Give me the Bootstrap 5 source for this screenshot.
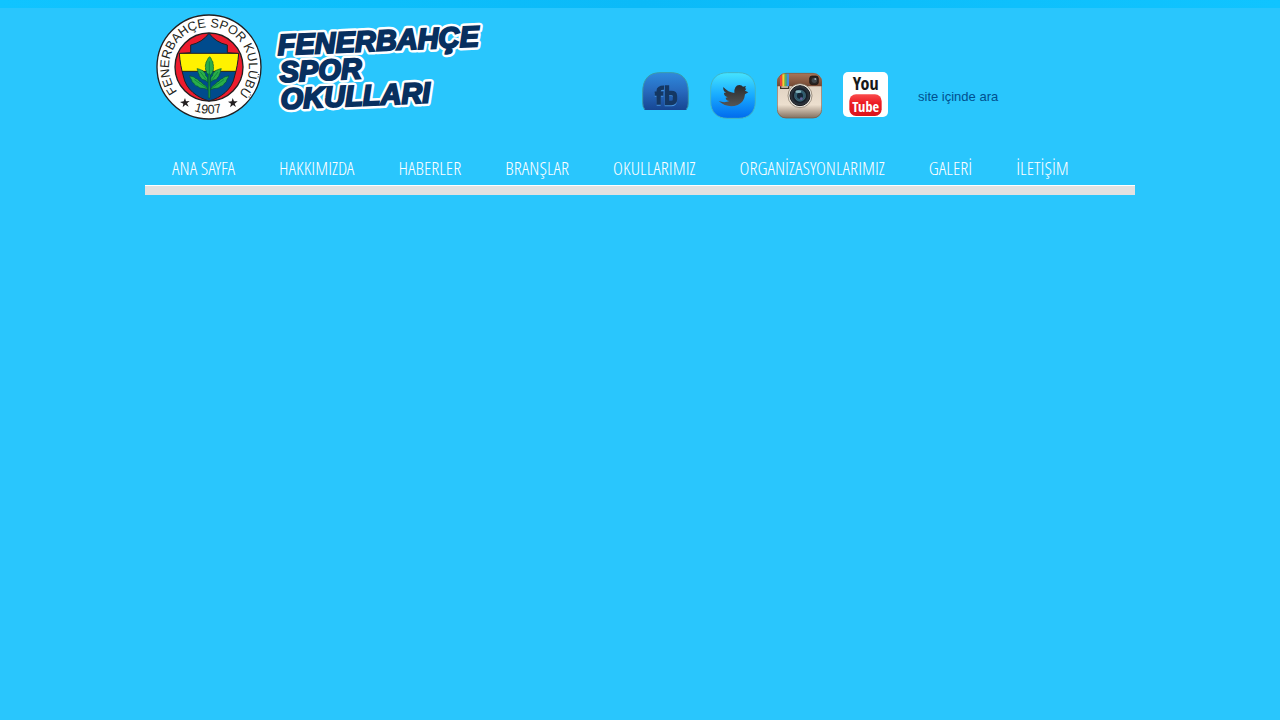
<!DOCTYPE html>
<html lang="tr">
<head>
<meta charset="utf-8">
<meta name="viewport" content="width=device-width, initial-scale=1">
<title>Fenerbahçe Spor Okulları</title>
<link rel="stylesheet" href="https://cdn.jsdelivr.net/npm/bootstrap@5.3.0/dist/css/bootstrap.min.css">
<style>
  body { background: #29c6fd; font-family: "Liberation Sans", Arial, sans-serif; }
  .top-strip { height: 8px; background: linear-gradient(90deg, #10c4ff, #0bbaf8 50%, #10c4ff); }
  .site { max-width: 990px; }
  .brand-area { padding: 6px 0 0 11px; gap: 12px; }
  .social { gap: 21px; padding-top: 64px; margin-left: auto; }
  .social a { display: block; }
  .social svg, .brand-area svg { display: block; }
  .search-box { width: 217px; margin: 78px 0 0 30px; }
  .search-box input { height: 22px; padding: 0; border: 0; background: transparent; color: #00508f; font-size: 13px; line-height: 22px; box-shadow: none; border-radius: 0; }
  .search-box input::placeholder { color: #00508f; opacity: 1; }
  .search-box input:focus { background: transparent; color: #00508f; box-shadow: none; }
  .menu { gap: 44px; padding: 34px 27px 3px; font-family: "Open Sans Condensed Light", "Open Sans Condensed", sans-serif; font-size: 19px; line-height: 28px; }
  .menu .nav-link { padding: 0; color: #fff; white-space: nowrap; }
  .rule { height: 10px; background: #e1e1e1; border-top: 1px solid #fff; }
  .crest-text { font: 38px "Liberation Sans", Arial, sans-serif; fill: #231f20; }
  .wordmark { font: italic bold 29px "Liberation Sans", Arial, sans-serif; }
  .wordmark .halo { fill: #fff; stroke: #fff; stroke-width: 7; stroke-linejoin: round; }
  .wordmark .ink { fill: #08305f; stroke: #08305f; stroke-width: 2; }
  .condensed { font-family: "Open Sans Condensed", "Open Sans", sans-serif; font-weight: bold; text-anchor: middle; }
</style>
</head>
<body>
<div class="top-strip"></div>
<div class="site container-fluid p-0">
  <header class="d-flex flex-wrap align-items-start">
    <a href="#" class="brand-area d-flex" aria-label="Fenerbahçe Spor Okulları">
      <svg width="106" height="106" viewBox="33 25 318 318">
        <defs>
          <path id="ring-top" d="M 97 258 A 120 120 0 1 1 280 266"/>
          <path id="ring-bottom" d="M 90 279 A 142 142 0 0 0 290 286"/>
          <path id="shield-shape" d="M192 83 Q212 110 247 118 L247 141 L281 143 C279 170 275 190 269 211 C262 252 226 277 192 286 C158 276 122 252 115 211 C109 190 105 170 103 143 L137 141 L137 118 Q172 110 192 83 Z"/>
          <clipPath id="shield"><use href="#shield-shape"/></clipPath>
        </defs>
        <circle cx="192" cy="184" r="156" fill="#fff" stroke="#231f20" stroke-width="4"/>
        <circle cx="192" cy="184" r="102" fill="#ed1c2e" stroke="#231f20" stroke-width="4"/>
        <g clip-path="url(#shield)">
          <path fill="#004b8d" d="M90 80h204v210H90z"/>
          <path fill="#fff200" stroke="#231f20" stroke-width="3" d="M90 143h204v54H90z"/>
        </g>
        <use href="#shield-shape" fill="none" stroke="#231f20" stroke-width="3"/>
        <g fill="#2aae4a" stroke="#00592d" stroke-width="2">
          <path d="M194 153c6 5 5 11 10 16-2 5 3 8 1 14 2 7-1 12-3 18l-6 9h-4l-8-10c2-5-5-8-2-14-3-6 1-10 1-16 4-5 4-12 11-17z"/>
          <path d="M188 253c-3-17-16-14-19-24-9 0-8-11-17-10-5-8-11-5-18-9 0 9 8 11 7 19 8 2 7 13 18 13 6 10 17 2 29 11z"/>
          <path d="M197 253c3-17 16-14 19-24 9 0 8-11 17-10 5-8 11-5 18-9 0 9-8 11-7 19-8 2-7 13-18 13-6 10-17 2-29 11z"/>
          <path d="M188 230c-1-9 2-15-6-20 1-8-5-9-8-15-6-2-10-5-18-6 4 7 1 11 6 17 0 8 6 8 8 15 6 2 11 1 18 9z"/>
          <path d="M197 230c1-9-2-15 6-20-1-8 5-9 8-15 6-2 10-5 18-6-4 7-1 11-6 17 0 8-6 8-8 15-6 2-11 1-18 9z"/>
          <path d="M190 205h5v72h-5z"/>
        </g>
        <path d="M193 167v75M148 222l39 27M237 222l-39 27M166 199l20 26M219 199l-20 26" stroke="#007b3a" stroke-width="2" fill="none"/>
        <text class="crest-text"><textPath href="#ring-top">FENERBAHÇE SPOR KULÜBÜ</textPath></text>
        <text class="crest-text" text-anchor="middle"><textPath href="#ring-bottom" startOffset="50%">1907</textPath></text>
        <path fill="#231f20" d="M120 277l3 10 11-1-8 7 5 10-10-6-8 8 2-11-10-5 11-2z"/>
        <path fill="#231f20" d="M263 277l4 10 11 0-9 7 4 10-9-6-9 7 3-11-9-6 11-1z"/>
      </svg>
      <svg width="210" height="106" viewBox="272 14 210 106">
        <g class="wordmark">
          <g class="halo">
            <text transform="translate(276 55) rotate(-2.5)">FENERBAHÇE</text>
            <text transform="translate(278 82) rotate(-2.5)">SPOR</text>
            <text transform="translate(279 109) rotate(-2.5)">OKULLARI</text>
          </g>
          <g class="ink" aria-hidden="true">
            <text transform="translate(276 55) rotate(-2.5)">FENERBAHÇE</text>
            <text transform="translate(278 82) rotate(-2.5)">SPOR</text>
            <text transform="translate(279 109) rotate(-2.5)">OKULLARI</text>
          </g>
        </g>
      </svg>
    </a>
    <div class="social d-flex align-items-start">
      <a href="#" aria-label="Facebook">
        <svg width="47" height="38" viewBox="0 0 141 114">
          <defs><linearGradient id="fb-bg" x2="0" y2="1"><stop stop-color="#2f8add"/><stop offset=".5" stop-color="#2769bd"/><stop offset="1" stop-color="#164693"/></linearGradient></defs>
          <path d="M2 114V61C2 18 24 2 54 2H87C117 2 139 18 139 61V95Q139 106 133 114H8Q2 106 2 95" fill="url(#fb-bg)"/>
          <path d="M8 112Q2 106 2 92V61C2 18 24 2 54 2H87C117 2 139 18 139 61V92Q139 106 133 112" fill="none" stroke="#3c9aa9" stroke-width="3"/>
          <g fill="none" stroke="#4593df" stroke-width="12" transform="translate(0 3)"><path d="M50 98V57Q50 47 66 47M38 65H64M74 42V94H88Q99 94 99 82V72Q99 63 88 63H76"/></g>
          <g fill="none" stroke="#143763" stroke-width="13"><path d="M50 98V57Q50 47 66 47M38 65H64M75 40V93H88Q99 93 99 82V72Q99 63 88 63H76"/></g>
        </svg>
      </a>
      <a href="#" aria-label="Twitter">
        <svg width="46" height="47" viewBox="0 0 138 141">
          <defs><linearGradient id="tw-bg" x2="0" y2="1"><stop stop-color="#45e4ff"/><stop offset=".5" stop-color="#18aaff"/><stop offset="1" stop-color="#006aee"/></linearGradient>
          <linearGradient id="tw-bird" x2="0" y2="1"><stop stop-color="#282b2e"/><stop offset="1" stop-color="#555"/></linearGradient></defs>
          <path d="M52 2H86C118 2 136 22 136 52V89C136 121 116 139 86 139H52C20 139 2 119 2 89V52C2 20 22 2 52 2Z" fill="url(#tw-bg)" stroke="#42b5c5" stroke-width="3"/>
          <path fill="url(#tw-bird)" d="M26 87Q43 94 59 87Q47 85 47 77L53 76Q41 71 42 62L48 63Q38 56 40 45Q54 61 73 63Q72 40 88 39Q96 39 99 44L108 42L105 49L109 50L105 56L115 61L105 67Q103 91 83 99Q52 110 26 87Z"/>
        </svg>
      </a>
      <a href="#" aria-label="Instagram">
        <svg width="45" height="47" viewBox="0 0 135 141">
          <defs><linearGradient id="ig-body" x2="0" y2="1"><stop stop-color="#d9cabb"/><stop offset=".7" stop-color="#ecdfce"/><stop offset="1" stop-color="#806e5e"/></linearGradient>
          <linearGradient id="ig-top" x2="0" y2="1"><stop stop-color="#a97759"/><stop offset="1" stop-color="#744833"/></linearGradient>
          <radialGradient id="ig-lens"><stop stop-color="#15202b"/><stop offset=".4" stop-color="#316276"/><stop offset=".65" stop-color="#151d27"/><stop offset="1" stop-color="#394047"/></radialGradient>
          <clipPath id="ig-clip"><rect y="3" width="135" height="136" rx="27"/></clipPath></defs>
          <g clip-path="url(#ig-clip)">
            <path fill="url(#ig-body)" d="M0 3h135v136H0z"/>
            <path fill="url(#ig-top)" d="M0 3h135v40H0z"/>
            <path fill="#ec4339" d="M9 3h7v40H9z"/><path fill="#f9cf32" d="M16 3h7v40h-7z"/><path fill="#4fb95e" d="M23 3h6v40h-6z"/><path fill="#3d8edc" d="M29 3h7v40h-7z"/>
          </g>
          <rect x="1" y="4" width="133" height="134" rx="26" fill="none" stroke="#765b48" stroke-width="2"/>
          <path d="M11 43v6h24v-6" fill="none" stroke="#3c3028" stroke-width="4"/>
          <rect x="98" y="12" width="26" height="26" rx="7" fill="#292321" stroke="#150f0d" stroke-width="2"/>
          <circle cx="112" cy="25" r="8" fill="#41464a"/><circle cx="115" cy="21" r="3" fill="#a0b0bd"/>
          <circle cx="69" cy="71" r="36" fill="#ede8df" stroke="#746656" stroke-width="2"/>
          <circle cx="69" cy="71" r="30" fill="url(#ig-lens)" stroke="#17191d" stroke-width="3"/>
          <circle cx="69" cy="71" r="16" fill="none" stroke="#4d7885" stroke-width="2"/>
          <circle cx="69" cy="71" r="9" fill="#142636"/><ellipse cx="64" cy="59" rx="9" ry="4" fill="#85b5be"/><circle cx="73" cy="80" r="4" fill="#65629b"/>
        </svg>
      </a>
      <a href="#" aria-label="YouTube">
        <svg width="45" height="45" viewBox="0 0 135 135">
          <defs><linearGradient id="yt-bg" x2="0" y2="1"><stop stop-color="#fa4b4b"/><stop offset=".4" stop-color="#ed1c24"/><stop offset="1" stop-color="#d9131b"/></linearGradient></defs>
          <rect width="135" height="135" rx="15" fill="#fff"/>
          <rect x="19" y="67" width="97" height="65" rx="20" fill="url(#yt-bg)"/>
          <text class="condensed" x="68" y="55" font-size="54" fill="#17191a">You</text>
          <text class="condensed" x="68" y="119" font-size="43" fill="#fff">Tube</text>
        </svg>
      </a>
    </div>
    <form class="search-box" onsubmit="return false">
      <label class="visually-hidden" for="q">Ara</label>
      <input id="q" type="text" class="form-control" placeholder="site içinde ara">
    </form>
  </header>
  <nav aria-label="Ana menü">
    <ul class="menu nav">
      <li><a class="nav-link" href="#">ANA SAYFA</a></li>
      <li><a class="nav-link" href="#">HAKKIMIZDA</a></li>
      <li><a class="nav-link" href="#">HABERLER</a></li>
      <li><a class="nav-link" href="#">BRANŞLAR</a></li>
      <li><a class="nav-link" href="#">OKULLARIMIZ</a></li>
      <li><a class="nav-link" href="#">ORGANİZASYONLARIMIZ</a></li>
      <li><a class="nav-link" href="#">GALERİ</a></li>
      <li><a class="nav-link" href="#">İLETİŞİM</a></li>
    </ul>
  </nav>
  <div class="rule"></div>
</div>
<script src="https://cdn.jsdelivr.net/npm/bootstrap@5.3.0/dist/js/bootstrap.bundle.min.js"></script>
</body>
</html>
